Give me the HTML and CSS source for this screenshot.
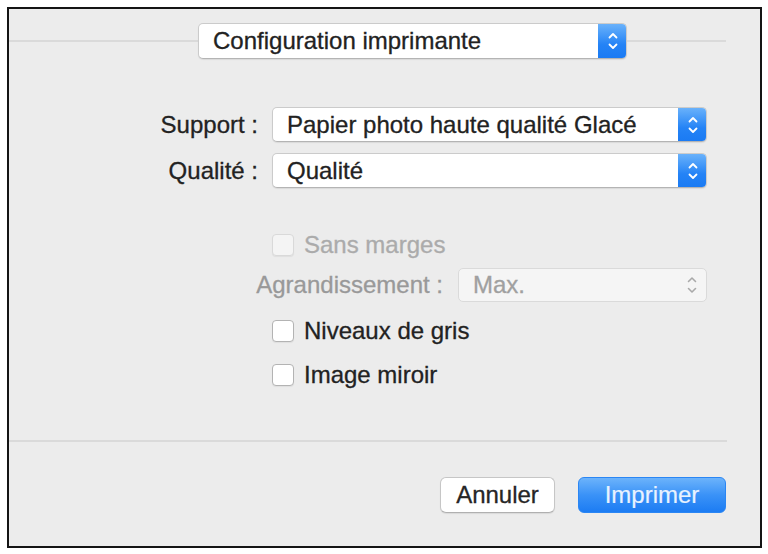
FILE: index.html
```html
<!DOCTYPE html>
<html lang="fr">
<head>
<meta charset="utf-8">
<title>Configuration imprimante</title>
<link rel="stylesheet" href="styles.css">
</head>
<body>
<div class="frame">
  <div class="header">
    <div class="line line-left"></div>
    <div class="popup popup-top">
      <span class="popup-text">Configuration imprimante</span>
      <span class="stepper"><svg width="12" height="20" viewBox="0 0 12 20"><path d="M2.5 6.5 L6 3 L9.5 6.5 M2.5 13.5 L6 17 L9.5 13.5" fill="none" stroke="#fff" stroke-width="1.8" stroke-linecap="round" stroke-linejoin="round"/></svg></span>
    </div>
    <div class="line line-right"></div>
  </div>

  <div class="form">
    <label class="label">Support :</label>
    <div class="popup">
      <span class="popup-text">Papier photo haute qualité Glacé</span>
      <span class="stepper"><svg width="12" height="20" viewBox="0 0 12 20"><path d="M2.5 6.5 L6 3 L9.5 6.5 M2.5 13.5 L6 17 L9.5 13.5" fill="none" stroke="#fff" stroke-width="1.8" stroke-linecap="round" stroke-linejoin="round"/></svg></span>
    </div>
    <label class="label">Qualité :</label>
    <div class="popup">
      <span class="popup-text">Qualité</span>
      <span class="stepper"><svg width="12" height="20" viewBox="0 0 12 20"><path d="M2.5 6.5 L6 3 L9.5 6.5 M2.5 13.5 L6 17 L9.5 13.5" fill="none" stroke="#fff" stroke-width="1.8" stroke-linecap="round" stroke-linejoin="round"/></svg></span>
    </div>
  </div>

  <div class="options">
    <div class="check-row disabled row-sans">
      <span class="box"></span><span>Sans marges</span>
    </div>
    <div class="agr-row">
      <span class="agr-label">Agrandissement :</span>
      <div class="popup popup-disabled">
        <span class="popup-text">Max.</span>
        <span class="stepper-plain"><svg width="12" height="20" viewBox="0 0 12 20"><path d="M2.5 6.5 L6 3 L9.5 6.5 M2.5 13.5 L6 17 L9.5 13.5" fill="none" stroke="#a9a9a9" stroke-width="1.6" stroke-linecap="round" stroke-linejoin="round"/></svg></span>
      </div>
    </div>
    <div class="check-row row-gris">
      <span class="box"></span><span>Niveaux de gris</span>
    </div>
    <div class="check-row row-miroir">
      <span class="box"></span><span>Image miroir</span>
    </div>
  </div>

  <div class="separator"></div>

  <div class="footer">
    <button class="btn btn-cancel">Annuler</button>
    <button class="btn btn-print">Imprimer</button>
  </div>
</div>
</body>
</html>
```
FILE: styles.css
```css
* { box-sizing: border-box; }
html, body { margin: 0; padding: 0; background: #ffffff; }
body {
  font-family: "Liberation Sans", Arial, sans-serif;
  font-size: 24px;
  color: #222222;
  -webkit-text-stroke: 0.3px currentColor;
}
.frame {
  margin: 7px 0 0 7px;
  width: 755px;
  height: 541px;
  border: 2px solid #141414;
  background: #ececec;
}
.header {
  display: flex;
  align-items: center;
  padding-top: 14px;
  padding-right: 34px;
}
.line { height: 2px; background: #dadada; }
.line-left { width: 189px; }
.line-right { flex: 1; }
.popup {
  display: flex;
  align-items: center;
  height: 35px;
  background: #ffffff;
  border: 1px solid #cbcbcb;
  border-bottom-color: #b4b4b4;
  border-radius: 5px;
  box-shadow: 0 1px 1px rgba(0,0,0,0.08);
  overflow: hidden;
}
.popup-top { width: 429px; height: 36px; }
.popup-text {
  flex: 1;
  padding-left: 14px;
  white-space: nowrap;
  line-height: 1;
}
.stepper {
  width: 29px;
  align-self: stretch;
  display: flex;
  align-items: center;
  justify-content: center;
  background: linear-gradient(#6db4fb, #2483f6 60%, #1a7af3);
  margin: -1px -1px -1px 0;
}
.stepper-plain {
  width: 29px;
  display: flex;
  align-items: center;
  justify-content: center;
}
.form {
  display: grid;
  grid-template-columns: 249px 435px;
  column-gap: 14px;
  row-gap: 11px;
  margin-top: 48px;
  align-items: center;
}
.label { text-align: right; white-space: nowrap; }
.options {
  margin-top: 45px;
  margin-left: 246px;
  width: 452px;
}
.check-row {
  display: flex;
  align-items: center;
  gap: 10px;
  height: 24px;
  padding-left: 17px;
}
.box {
  width: 22px;
  height: 22px;
  background: #ffffff;
  border: 1px solid #b3b3b3;
  border-radius: 4px;
  box-shadow: 0 1px 1px rgba(0,0,0,0.06);
  -webkit-text-stroke: 0;
}
.disabled { color: #ababab; }
.disabled .box { background: #f4f4f4; border-color: #d9d9d9; }
.agr-row {
  display: flex;
  justify-content: flex-end;
  align-items: center;
  gap: 15px;
  margin-top: 11px;
}
.agr-label { color: #999999; white-space: nowrap; }
.popup-disabled {
  width: 249px;
  height: 34px;
  background: #f5f5f5;
  border-color: #dadada;
  color: #a0a0a0;
  box-shadow: none;
}
.row-gris { margin-top: 17px; }
.row-miroir { margin-top: 20px; }
.separator {
  margin-top: 53px;
  margin-right: 33px;
  height: 2px;
  background: #dadada;
}
.footer {
  display: flex;
  justify-content: flex-end;
  gap: 23px;
  margin-top: 35px;
  padding-right: 34px;
}
.btn {
  font-family: inherit;
  font-size: 24px;
  height: 36px;
  border-radius: 6px;
  padding: 0;
  -webkit-text-stroke: 0.3px currentColor;
}
.btn-cancel {
  width: 115px;
  background: #ffffff;
  border: 1px solid #c6c6c6;
  border-bottom-color: #b0b0b0;
  color: #262626;
  box-shadow: 0 1px 1px rgba(0,0,0,0.08);
}
.btn-print {
  width: 148px;
  border: 1px solid #2a86f4;
  background: linear-gradient(#6cb3fb, #3a92f7 50%, #1c7cf3);
  color: #e8f2ff;
  -webkit-text-stroke: 0.2px currentColor;
}
```
